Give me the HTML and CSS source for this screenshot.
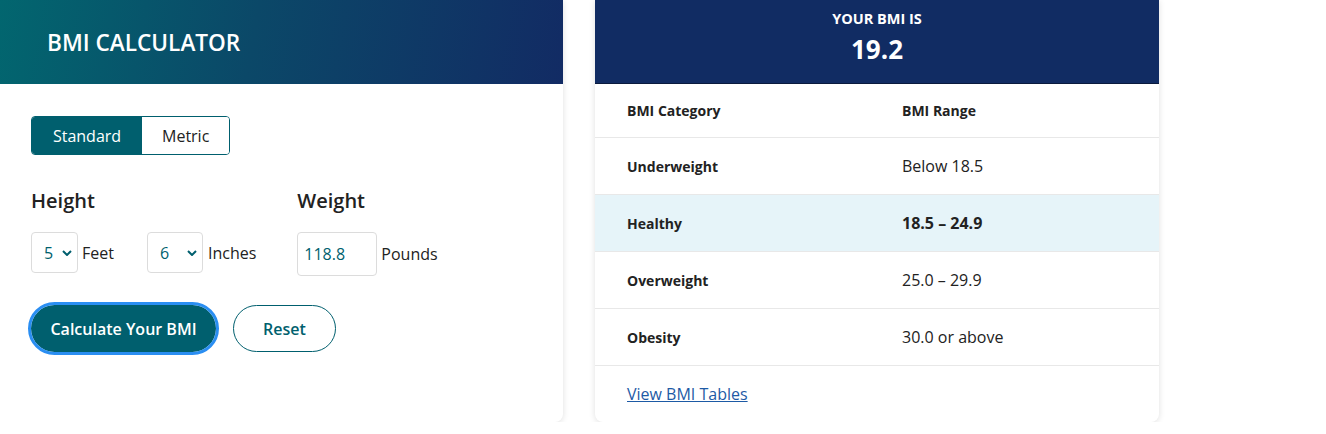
FILE: index.html
```html
<!DOCTYPE html>
<html lang="en">
<head>
<meta charset="utf-8">
<title>BMI Calculator</title>
<link rel="stylesheet" href="styles.css">
</head>
<body>
<div class="page">
  <section class="card calc">
    <header class="calc-head">BMI CALCULATOR</header>
    <div class="calc-body">
      <div class="toggle">
        <button class="seg seg-on" type="button">Standard</button>
        <button class="seg" type="button">Metric</button>
      </div>
      <div class="fields">
        <div class="group">
          <h3 class="label">Height</h3>
          <div class="row">
            <span class="sel sel-feet">
              <select><option>5</option></select>
              <svg class="chev" viewBox="0 0 10 6" width="10" height="6"><path d="M1 1l4 4 4-4" fill="none" stroke="#005f6e" stroke-width="2"/></svg>
            </span>
            <span class="unit">Feet</span>
            <span class="sel sel-in">
              <select><option>6</option></select>
              <svg class="chev" viewBox="0 0 10 6" width="10" height="6"><path d="M1 1l4 4 4-4" fill="none" stroke="#005f6e" stroke-width="2"/></svg>
            </span>
            <span class="unit">Inches</span>
          </div>
        </div>
        <div class="group">
          <h3 class="label">Weight</h3>
          <div class="row">
            <input class="num" type="text" value="118.8">
            <span class="unit">Pounds</span>
          </div>
        </div>
      </div>
      <div class="actions">
        <button class="btn btn-primary" type="button">Calculate Your BMI</button>
        <button class="btn btn-ghost" type="button">Reset</button>
      </div>
    </div>
  </section>

  <section class="card result">
    <header class="res-head">
      <div class="res-title">YOUR BMI IS</div>
      <div class="res-value">19.2</div>
    </header>
    <div class="tbl">
      <div class="tr th"><span class="c1">BMI Category</span><span class="c2">BMI Range</span></div>
      <div class="tr"><span class="c1">Underweight</span><span class="c2 v">Below 18.5</span></div>
      <div class="tr hl"><span class="c1">Healthy</span><span class="c2 v b">18.5 – 24.9</span></div>
      <div class="tr"><span class="c1">Overweight</span><span class="c2 v">25.0 – 29.9</span></div>
      <div class="tr"><span class="c1">Obesity</span><span class="c2 v">30.0 or above</span></div>
      <div class="tr foot"><a class="link" href="#">View BMI Tables</a></div>
    </div>
  </section>
</div>
</body>
</html>
```

FILE: styles.css
```css
* { box-sizing: border-box; }
html, body { margin: 0; padding: 0; background: #fff; }
body {
  font-family: "Open Sans", "Noto Sans", sans-serif;
  color: #222;
}
.page {
  display: flex;
  gap: 32px;
  align-items: stretch;
  width: 1326px;
}
.card {
  background: #fff;
  border-radius: 0 0 8px 8px;
  box-shadow: 0 1px 6px rgba(0, 0, 0, 0.13);
  overflow: hidden;
  height: 422px;
}
.calc { width: 563px; border-bottom-left-radius: 0; }
.result { width: 564px; }

.calc-head {
  height: 84px;
  display: flex;
  align-items: center;
  padding-left: 47px;
  color: #fff;
  font-size: 22.6px;
  font-weight: 600;
  background: linear-gradient(100deg, #02666f 0%, #0b4868 45%, #122b64 100%);
}
.calc-body { padding: 32px 31px; }

.toggle {
  display: inline-flex;
  border: 1px solid #005f6e;
  border-radius: 4px;
  overflow: hidden;
  height: 39px;
}
.seg {
  font-family: inherit;
  font-size: 16px;
  border: 0;
  background: #fff;
  color: #222;
  padding: 0 20px;
  width: 87px;
  cursor: pointer;
}
.seg-on {
  background: #005f6e;
  color: #fff;
  width: 110px;
}

.fields {
  display: flex;
  gap: 41px;
  margin-top: 32px;
}
.label {
  margin: 0;
  font-size: 20px;
  font-weight: 600;
  line-height: 27px;
  color: #222;
}
.row {
  display: flex;
  align-items: center;
  margin-top: 18px;
}
.sel { position: relative; display: inline-block; }
.sel select {
  appearance: none;
  -webkit-appearance: none;
  font-family: inherit;
  font-size: 16px;
  color: #005f6e;
  background: #fff;
  border: 1px solid #dcdcdc;
  border-radius: 4px;
  height: 41px;
  padding: 0 0 0 12px;
  display: block;
}
.sel-feet select { width: 47px; }
.sel-in select { width: 56px; }
.chev {
  position: absolute;
  top: 18px;
  right: 6px;
  pointer-events: none;
}
.unit {
  font-size: 16px;
  color: #222;
  margin-left: 4px;
}
.sel-in { margin-left: 33px; }
.sel-in + .unit { margin-left: 5px; }

.num {
  font-family: inherit;
  font-size: 16px;
  color: #005f6e;
  width: 80px;
  height: 44px;
  border: 1px solid #dcdcdc;
  border-radius: 4px;
  padding: 0 0 0 6px;
}
.num + .unit { margin-left: 4px; }

.actions {
  display: flex;
  gap: 17px;
  margin-top: 29px;
}
.btn {
  font-family: inherit;
  font-size: 16px;
  font-weight: 600;
  height: 47px;
  border-radius: 24px;
  cursor: pointer;
  white-space: nowrap;
  padding: 0;
}
.btn-primary {
  background: #005f6e;
  color: #fff;
  border: 0;
  width: 185px;
  outline: 3px solid #2a8ef2;
  outline-offset: 0;
}
.btn-ghost {
  background: #fff;
  color: #005f6e;
  border: 1px solid #005f6e;
  width: 103px;
}

.res-head {
  height: 84px;
  background: #112c63;
  border-bottom: 1px solid #0a1a3d;
  color: #fff;
  text-align: center;
  padding-top: 9px;
}
.res-title {
  font-size: 14.5px;
  font-weight: 700;
  line-height: 20px;
}
.res-value {
  font-size: 26px;
  font-weight: 700;
  line-height: 36px;
  margin-top: 2px;
}
.tr {
  display: flex;
  align-items: center;
  height: 57px;
  padding-left: 32px;
  border-bottom: 1px solid #e8e8e8;
}
.tr.th { height: 54px; }
.tr.hl { background: #e6f4f9; }
.tr.foot { height: 56px; border-bottom: 0; }
.c1 {
  width: 275px;
  font-size: 14px;
  font-weight: 700;
  color: #222;
}
.c2 {
  font-size: 14px;
  font-weight: 700;
  color: #222;
}
.c2.v { font-size: 16px; font-weight: 400; }
.c2.v.b { font-weight: 700; }
.link {
  font-size: 16px;
  color: #1d5aa5;
  text-decoration: underline;
}
```
